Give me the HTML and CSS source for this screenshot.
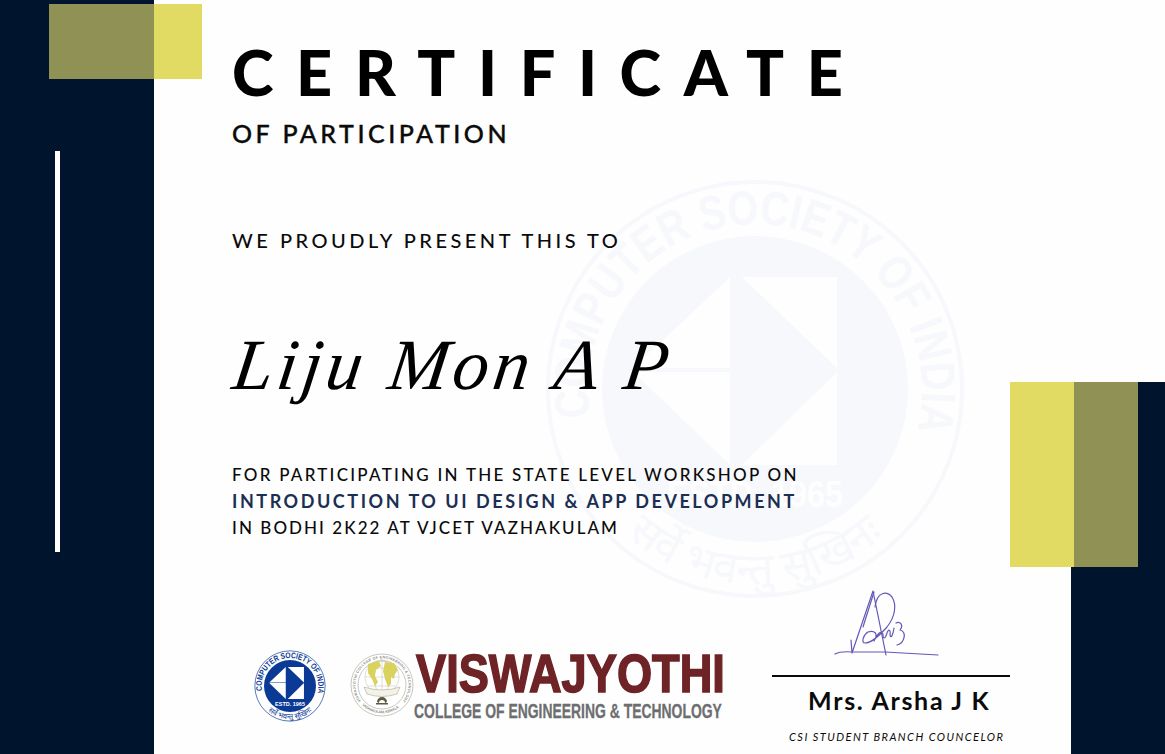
FILE: index.html
```html
<!DOCTYPE html>
<html lang="en">
<head>
<meta charset="utf-8">
<title>Certificate of Participation</title>
<link rel="stylesheet" href="styles.css">
</head>
<body>
<svg class="defs" width="0" height="0" aria-hidden="true">
  <defs>
    <path id="ring-top" d="M-165 28 A167 167 0 1 1 165 28"/>
    <path id="ring-bottom" d="M-150 125 A195 195 0 0 0 150 125"/>
    <symbol id="csi" viewBox="-212 -212 424 424">
      <circle class="csi-ring" r="207"/>
      <circle class="csi-disc" r="153"/>
      <polygon class="csi-cut" points="-25,-112 -122,-21 -25,-21"/>
      <polygon class="csi-cut" points="-122,-17 -25,-17 -25,76"/>
      <polygon class="csi-cut" points="-13,-112 82,-112 82,-21"/>
      <polygon class="csi-cut" points="82,-17 82,76 -13,76"/>
      <text class="csi-estd" x="0" y="118" textLength="176" lengthAdjust="spacingAndGlyphs">ESTD. 1965</text>
      <text class="csi-name"><textPath href="#ring-top" textLength="590" lengthAdjust="spacingAndGlyphs">COMPUTER SOCIETY OF INDIA</textPath></text>
      <text class="csi-motto"><textPath href="#ring-bottom" startOffset="50%">सर्वे भवन्तु सुखिनः</textPath></text>
    </symbol>
  </defs>
</svg>
<div class="cert">
  <svg class="watermark"><use href="#csi"/></svg>

  <aside class="band-left"><span class="band-line"></span></aside>

  <main class="body">
    <h1 class="title">CERTIFICATE</h1>
    <p class="subtitle">OF PARTICIPATION</p>
    <p class="present">WE PROUDLY PRESENT THIS TO</p>
    <p class="name">Liju Mon A P</p>
    <p class="detail">FOR PARTICIPATING IN THE STATE LEVEL WORKSHOP ON</p>
    <p class="detail detail-strong">INTRODUCTION TO UI DESIGN &amp; APP DEVELOPMENT</p>
    <p class="detail detail-last">IN BODHI 2K22 AT VJCET VAZHAKULAM</p>

    <footer class="footer">
      <div class="logos">
        <svg class="logo-csi"><use href="#csi"/></svg>
        <svg class="logo-vj" viewBox="-32 -32 64 64">
          <defs>
            <path id="vj-arc" d="M-21 16 A26.5 26.5 0 1 1 21 16"/>
            <path id="vj-arc-low" d="M-20 20 A28.5 28.5 0 0 0 20 20"/>
          </defs>
          <circle class="vj-outer" r="31"/>
          <circle class="vj-inner" r="24"/>
          <text class="vj-small"><textPath href="#vj-arc" textLength="118">VISWAJYOTHI COLLEGE OF ENGINEERING &amp; TECHNOLOGY</textPath></text>
          <text class="vj-small"><textPath href="#vj-arc-low" textLength="40">VAZHAKULAM, KERALA</textPath></text>
          <circle class="vj-globe" cy="-8" r="17"/>
          <ellipse class="vj-globe" cy="-8" rx="8" ry="17"/>
          <path class="vj-globe" d="M-17 -8H17M-14 -17H14M-14 1H14M0 -25V9"/>
          <path class="vj-land" d="M-14 -21 L-3 -24 L-1 -19 L-6 -15 L-7 -9 L-4 -3 L-7 1 L-10 -6 L-14 -12Z"/>
          <path class="vj-land" d="M3 -23 L12 -22 L16 -15 L13 -11 L12 -6 L9 -8 L9 -1 L6 2 L3 -6 L1 -14Z"/>
          <path class="vj-ribbon" d="M-18 2 Q0 8 18 2 L15 9 Q0 14 -15 9Z"/>
          <path class="vj-emblem" d="M-5 17 A5 5 0 0 1 5 17 L3 18 A3 3 0 0 0 -3 18Z"/>
          <rect class="vj-emblem" x="-6" y="18" width="12" height="1.5"/>
        </svg>
        <svg class="wordmark" viewBox="0 0 312 76">
          <text class="wordmark-main" transform="translate(3 42) scale(.837 1)">VISWAJYOTHI</text>
          <text class="wordmark-sub" transform="translate(1 68) scale(.697 1)">COLLEGE OF ENGINEERING &amp; TECHNOLOGY</text>
        </svg>
      </div>
      <div class="signatory">
        <svg class="signature" viewBox="0 0 125 80">
          <path d="M10 69 Q16 66 27 67 L60 67 L113 70"/>
          <path d="M26 55 L27 68 L48 6 L61 70"/>
          <path d="M49 7 L38 42"/>
          <path d="M50 22 C52 6 62 6 67 12 C72 20 70 32 62 42 C55 50 46 58 40 58 C36 58 38 50 43 47 C49 45 54 48 49 56 C53 48 56 45 58 49 C58 54 60 55 62 48 C63 44 66 44 65 50 C66 54 68 50 69 43"/>
          <path d="M71 38 C75 36 79 40 75 45 C82 46 80 58 72 60"/>
        </svg>
        <div class="sign-rule"></div>
        <p class="sign-name">Mrs. Arsha J K</p>
        <p class="sign-role">CSI STUDENT BRANCH COUNCELOR</p>
      </div>
    </footer>
  </main>

  <div class="band-right"></div>
  <div class="accent accent-top"><span class="olive"></span><span class="yellow"></span></div>
  <div class="accent accent-right"><span class="yellow"></span><span class="olive"></span></div>
</div>
</body>
</html>
```

FILE: styles.css
```css
* { box-sizing: border-box; }
html, body { margin: 0; padding: 0; }
body { background: #fff; font-family: "Lato", "Liberation Sans", sans-serif; color: #0b0b0b; }
p, h1 { margin: 0; }
.defs { position: absolute; }

.cert { position: relative; display: flex; width: 1165px; height: 754px; overflow: hidden; background: #fefefe; }

.watermark { position: absolute; left: 543px; top: 177px; width: 424px; height: 424px; z-index: 0;
  --ink: #f7f8fc; --paper: #fefefe; }

.band-left { flex: 0 0 154px; background: #00142d; padding: 151px 0 0 55px; }
.band-line { display: block; width: 5px; height: 401px; background: #fff; }

.body { position: relative; z-index: 1; flex: 1; min-width: 0; display: flex; flex-direction: column; padding: 36px 0 0 78px; }

.title { font-size: 63px; line-height: 72px; font-weight: 900; letter-spacing: 22.6px; color: #000; white-space: nowrap; }
.subtitle { margin-top: 8px; font-size: 25px; line-height: 34px; font-weight: 500; letter-spacing: 3.5px; -webkit-text-stroke: 0.35px #0b0b0b; }
.present { margin-top: 76px; font-size: 20px; line-height: 28px; letter-spacing: 3.5px; font-weight: 500; }
.name { margin-top: 69px; margin-left: -4px; font-family: "Liberation Serif", serif; font-style: italic; font-size: 72px; line-height: 84px; letter-spacing: 4.3px; color: #000; white-space: nowrap; transform: skewX(-8deg); transform-origin: 0 100%; }
.detail { font-size: 17px; line-height: 27px; letter-spacing: 2.25px; font-weight: 500; }
.name + .detail { margin-top: 54px; }
.detail-strong { font-weight: 700; color: #1b2f52; font-size: 18px; letter-spacing: 2.55px; }
.detail-last { margin-top: -1px; letter-spacing: 2.05px; }

.footer { margin-top: auto; display: flex; padding-left: 22px; }
.logos { display: flex; align-items: flex-start; padding-top: 66px; }
.logo-csi { width: 72px; height: 72px; --ink: #0b3a96; --paper: #fff; margin-right: 24px; flex: none; }
.logo-vj { width: 64px; height: 64px; margin-top: 3px; flex: none; }
.wordmark { width: 312px; height: 76px; flex: none; margin-left: -1px; }

.signatory { margin-left: auto; margin-right: 155px; width: 238px; padding-bottom: 9px; padding-top: 1px; flex: none; }
.signature { display: block; width: 125px; height: 80px; margin-left: 53px; fill: none; stroke: #6358b8; stroke-width: 1.2; stroke-linecap: round; stroke-linejoin: round; }
.sign-rule { height: 2px; background: #0a0a0a; margin-top: 10px; }
.sign-name { margin-top: 7px; padding-left: 36px; font-size: 25px; line-height: 32px; font-weight: 700; letter-spacing: 1.7px; white-space: nowrap; }
.sign-role { margin-top: 13px; padding-left: 17px; font-size: 11px; line-height: 16px; font-style: italic; letter-spacing: 1.46px; white-space: nowrap; }

.band-right { position: absolute; left: 1071px; top: 382px; right: 0; bottom: 0; z-index: 2; background: #00142d; }
.accent { position: absolute; display: flex; z-index: 3; }
.accent-top { left: 49px; top: 4px; height: 75px; }
.accent-top .olive { width: 105px; }
.accent-top .yellow { width: 48px; }
.accent-right { left: 1010px; top: 382px; height: 185px; }
.accent-right .yellow, .accent-right .olive { width: 64px; }
.olive { background: #8f9254; }
.yellow { background: #e1db63; }

.csi-ring { fill: none; stroke: var(--ink); stroke-width: 4; }
.csi-disc { fill: var(--ink); }
.csi-cut { fill: var(--paper); }
.csi-estd { fill: var(--paper); font-family: "Liberation Sans Narrow", "Liberation Sans", sans-serif; font-weight: 700; font-size: 36px; text-anchor: middle; }
.csi-name { fill: var(--ink); font-family: "Liberation Sans Narrow", "Liberation Sans", sans-serif; font-weight: 700; font-size: 48px; }
.csi-motto { fill: var(--ink); font-family: "Noto Sans", "Noto Sans CJK SC", sans-serif; font-size: 44px; text-anchor: middle; }

.vj-outer, .vj-inner { fill: #fff; stroke: #b9b9b0; stroke-width: 0.8; }
.vj-small { fill: #8c8c86; font-family: "Liberation Sans", sans-serif; font-size: 3.6px; font-weight: 700; }
.vj-globe { fill: none; stroke: #bdbdb2; stroke-width: 0.5; }
.vj-land { fill: #d9d25c; }
.vj-ribbon { fill: #f4f2e6; stroke: #a9a99c; stroke-width: 0.6; }
.vj-emblem { fill: #5d5a44; }

.wordmark-main { font-family: "Liberation Sans Narrow", "Liberation Sans", sans-serif; font-weight: 700; font-size: 54px; fill: #6e2326; stroke: #6e2326; stroke-width: 1.6; }
.wordmark-sub { font-family: "Liberation Sans Narrow", "Liberation Sans", sans-serif; font-weight: 700; font-size: 20px; fill: #6d6e70; stroke: #6d6e70; stroke-width: 0.3; }
```
